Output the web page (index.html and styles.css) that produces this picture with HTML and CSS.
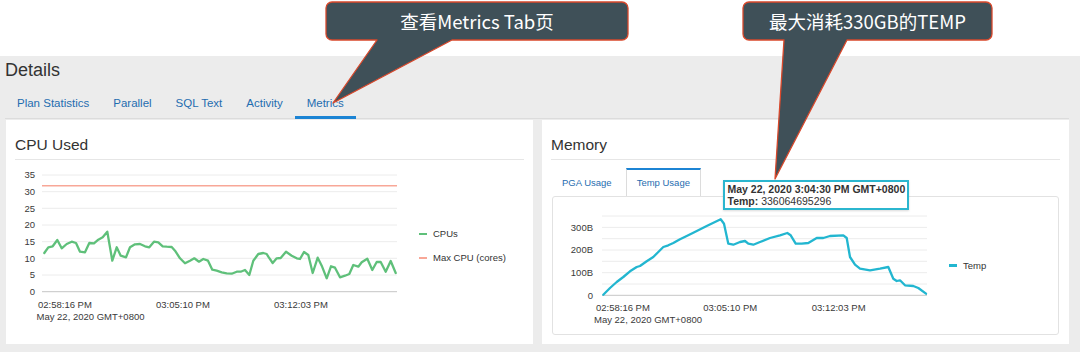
FILE: index.html
```html
<!DOCTYPE html>
<html lang="zh">
<head>
<meta charset="utf-8">
<title>Details - Metrics</title>
<link rel="stylesheet" href="styles.css">
</head>
<body>
<header class="topband"></header>
<main class="details">
  <h2 class="details-title">Details</h2>
  <nav class="tabs">
    <a class="tab">Plan Statistics</a>
    <a class="tab">Parallel</a>
    <a class="tab">SQL Text</a>
    <a class="tab">Activity</a>
    <a class="tab active">Metrics</a>
  </nav>
  <div class="panels">
    <section class="card">
      <h3 class="card-title">CPU Used</h3>
      <div class="chart-row">
        <svg class="chart" viewBox="15 161 390 169" width="390" height="169">
          <g class="grid">
            <line x1="42" x2="397" y1="176" y2="176"/>
            <line x1="42" x2="397" y1="192.7" y2="192.7"/>
            <line x1="42" x2="397" y1="209.3" y2="209.3"/>
            <line x1="42" x2="397" y1="226" y2="226"/>
            <line x1="42" x2="397" y1="242.7" y2="242.7"/>
            <line x1="42" x2="397" y1="259.3" y2="259.3"/>
            <line x1="42" x2="397" y1="276" y2="276"/>
          </g>
          <line class="axis" x1="42" x2="397" y1="292.7" y2="292.7"/>
          <g class="ylabels">
            <text x="35" y="179.4">35</text>
            <text x="35" y="196">30</text>
            <text x="35" y="212.7">25</text>
            <text x="35" y="229.4">20</text>
            <text x="35" y="246">15</text>
            <text x="35" y="262.7">10</text>
            <text x="35" y="279.4">5</text>
            <text x="35" y="296">0</text>
          </g>
          <g class="xlabels">
            <text x="38" y="308.5">02:58:16 PM</text>
            <text x="156" y="308.5">03:05:10 PM</text>
            <text x="274" y="308.5">03:12:03 PM</text>
            <text x="36.5" y="320.7">May 22, 2020 GMT+0800</text>
          </g>
          <line class="maxline" x1="42" x2="397" y1="186.7" y2="186.7"/>
          <polyline class="cpuline" points="44.3,254 48.3,248.3 52.7,247.3 57.3,241 61.7,249.3 66.7,245 71.7,242.7 76,244 80,252.7 85,253.3 89.3,244 94,244.3 98.3,240.7 102.7,238.3 107.3,232.7 112.3,261.7 116.7,248.3 120.7,256.7 126,258.3 130,248.3 135,245.3 140,245 145,247.3 149.3,248.3 154,242.7 158.3,243.3 162.7,247.3 166.7,247.7 171.7,248 175,251.7 180,259.3 185,264.3 190,261.7 194.3,259.3 199,262.7 203.3,260 208,261.7 212.3,270.7 216.7,271.7 221.7,273.3 226.7,274.3 231.7,274.7 236.7,272.7 240.7,272.7 245,271 249.3,276 253.3,261.7 258.3,255 263.3,254 266.7,255 268.3,257.7 272.7,264 276.7,259.3 280.7,259 286,252.7 291.7,256.7 296.7,259.3 300,260 304,253 308.3,256 312.7,274 317.7,258.7 321.7,266.7 326.7,279.3 331,267.3 335,268.7 340,278.3 345,276.7 349.3,275 353.3,266 358.3,267.7 361.7,263.3 367.3,259.7 372.3,271 376.7,263 380.7,263 385.7,272.7 390.7,262 395.7,274"/>
        </svg>
        <ul class="legend cpu-legend">
          <li><span class="swatch green"></span>CPUs</li>
          <li><span class="swatch salmon"></span>Max CPU (cores)</li>
        </ul>
      </div>
    </section>
    <section class="card">
      <h3 class="card-title">Memory</h3>
      <div class="subtabs">
        <span class="subtab">PGA Usage</span>
        <span class="subtab active">Temp Usage</span>
      </div>
      <div class="frame">
        <svg class="chart" viewBox="553 197 387 133" width="387" height="133">
          <g class="grid">
            <line x1="602" x2="927" y1="214" y2="214"/>
            <line x1="602" x2="927" y1="225.4" y2="225.4"/>
            <line x1="602" x2="927" y1="236.7" y2="236.7"/>
            <line x1="602" x2="927" y1="248" y2="248"/>
            <line x1="602" x2="927" y1="259.3" y2="259.3"/>
            <line x1="602" x2="927" y1="270.7" y2="270.7"/>
            <line x1="602" x2="927" y1="282" y2="282"/>
          </g>
          <line class="axis" x1="602" x2="927" y1="293.3" y2="293.3"/>
          <g class="ylabels">
            <text x="593" y="228.7">300B</text>
            <text x="593" y="251.4">200B</text>
            <text x="593" y="274">100B</text>
            <text x="593" y="296.5">0</text>
          </g>
          <g class="xlabels">
            <text x="596" y="309.3">02:58:16 PM</text>
            <text x="703.3" y="309.3">03:05:10 PM</text>
            <text x="811.7" y="309.3">03:12:03 PM</text>
            <text x="594" y="321">May 22, 2020 GMT+0800</text>
          </g>
          <polyline class="templine" points="603.3,292.7 610,286 616.7,280 623.3,275 630,269.3 636.7,265 640,264 646.7,259.3 653.3,255 658.3,250 663.3,245 668.3,243.3 673.3,241 680,237.3 686.7,234 693.3,230.7 706.7,224 720.7,217.3 724,221.7 728.3,241.7 733.3,242.7 740,240 745,239 748.3,241.7 753.3,242.7 760,240 770,236 780,233.3 787.3,231 790.7,233.3 795.7,241.7 801.7,241.7 808.3,241 816.7,236 823.3,236 830,234 843.3,233.3 846.7,236 850,255 855,262.7 860,266.7 870,268.3 880,266.7 888.3,265 893.3,276.7 896.7,279 900,278.3 905,283.3 913.3,284 918.3,286 926,291.7"/>
        </svg>
        <ul class="legend temp-legend">
          <li><span class="swatch cyan"></span>Temp</li>
        </ul>
        <div class="tooltip">
          <div class="tip-title">May 22, 2020 3:04:30 PM GMT+0800</div>
          <div><b>Temp:</b> 336064695296</div>
        </div>
      </div>
    </section>
  </div>
</main>

<svg class="callouts" viewBox="0 0 1080 352" width="1080" height="352">
  <path d="M332,2 H622 A6,6 0 0 1 628,8 V34 A6,6 0 0 1 622,40 H452 L333,103 L377,40 H332 A6,6 0 0 1 326,34 V8 A6,6 0 0 1 332,2 Z"/>
  <path d="M749,2 H986 A6,6 0 0 1 992,8 V34 A6,6 0 0 1 986,40 H847 L775,179 L784,40 H749 A6,6 0 0 1 743,34 V8 A6,6 0 0 1 749,2 Z"/>
</svg>
<div class="callout-text c1">查看Metrics Tab页</div>
<div class="callout-text c2">最大消耗330GB的TEMP</div>
</body>
</html>
```

FILE: styles.css
```css
* { box-sizing: border-box; }

html, body {
  margin: 0;
  padding: 0;
}

body {
  position: relative;
  width: 1080px;
  height: 352px;
  overflow: hidden;
  font-family: "Liberation Sans", Arial, sans-serif;
  color: #333;
  background: #ececec;
}

.topband {
  height: 56px;
  background: #ffffff;
}

.details {
  padding: 3px 11px 7px 6px;
  background: #ececec;
}

.details-title {
  margin: 0 0 0 -1px;
  font-size: 18px;
  line-height: 22px;
  font-weight: normal;
  color: #333;
}

.tabs {
  display: flex;
  margin: 15px 0 0 -1px;
  border-bottom: 1px solid #dcdcdc;
}

.tab {
  padding: 0 12px 6px;
  font-size: 11.5px;
  line-height: 14px;
  color: #1f6db0;
  border-bottom: 3px solid transparent;
  margin-bottom: -1px;
}

.tab.active {
  border-bottom-color: #1c84d4;
}

.panels {
  display: grid;
  grid-template-columns: 1fr 1fr;
  gap: 9px;
  height: 224px;
  margin-top: 1px;
}

.card {
  background: #ffffff;
  padding: 16px 9px 0;
}

.card-title {
  margin: 0;
  padding-bottom: 5px;
  border-bottom: 1px solid #e6e6e6;
  font-size: 15.5px;
  line-height: 18px;
  font-weight: normal;
  color: #333;
}

.chart-row {
  display: flex;
  align-items: center;
}

.chart {
  display: block;
  flex: none;
}

.chart .grid line {
  stroke: #ececec;
  stroke-width: 1;
}

.chart .axis {
  stroke: #c6c6c6;
  stroke-width: 1;
}

.chart text {
  font-family: "Liberation Sans", Arial, sans-serif;
  font-size: 9.5px;
  fill: #3a3a3a;
}

.chart .ylabels text {
  text-anchor: end;
}

.maxline {
  stroke: #f8a797;
  stroke-width: 1.6;
}

.cpuline {
  fill: none;
  stroke: #5fc07a;
  stroke-width: 2.3;
  stroke-linejoin: round;
  stroke-linecap: round;
}

.templine {
  fill: none;
  stroke: #22b6d0;
  stroke-width: 2.3;
  stroke-linejoin: round;
  stroke-linecap: round;
}

.legend {
  list-style: none;
  margin: 0;
  padding: 0 0 0 14px;
  display: flex;
  flex-direction: column;
  gap: 12px;
  font-size: 9.5px;
  line-height: 12px;
  color: #333;
}

.legend li {
  display: flex;
  align-items: center;
  white-space: nowrap;
}

.swatch {
  display: inline-block;
  width: 8px;
  height: 2.5px;
  margin-right: 6px;
}

.swatch.green { background: #5fc07a; }
.swatch.salmon { background: #f8a797; }
.swatch.cyan { background: #22b6d0; }

.cpu-legend {
  margin-top: 3px;
}

.subtabs {
  display: flex;
  gap: 3px;
  margin-top: 8px;
  position: relative;
  z-index: 1;
}

.subtab {
  padding: 0 11px;
  border-top: 2px solid transparent;
  font-size: 9.5px;
  line-height: 26px;
  color: #1f6db0;
}

.subtab.active {
  padding: 0 10px;
  background: #ffffff;
  border: 1px solid #dcdcdc;
  border-top: 2px solid #1c84d4;
  border-bottom: none;
  line-height: 26px;
  height: 28px;
  margin-bottom: -1px;
}

.frame {
  position: relative;
  display: flex;
  align-items: center;
  height: 139px;
  margin: 0 1px;
  border: 1px solid #e2e2e2;
  border-radius: 3px;
}

.temp-legend {
  padding-left: 9px;
}

.tooltip {
  position: absolute;
  left: 170px;
  top: -17px;
  z-index: 2;
  padding: 1px 2px 1px 2.5px;
  background: #ffffff;
  border: 2px solid #2bb6cf;
  box-shadow: 0 1px 2px rgba(0, 0, 0, 0.15);
  font-size: 10.5px;
  line-height: 12px;
  color: #333;
  white-space: nowrap;
}

.tip-title {
  font-weight: bold;
}

.callouts {
  position: absolute;
  left: 0;
  top: 0;
  z-index: 5;
  pointer-events: none;
}

.callouts path {
  fill: #3f5058;
  stroke: #d9482b;
  stroke-width: 1.3;
  stroke-linejoin: round;
}

.callout-text {
  position: absolute;
  top: 2px;
  z-index: 6;
  height: 38px;
  line-height: 38px;
  text-align: center;
  color: #ffffff;
  font-family: "Noto Sans CJK SC", "Noto Sans", sans-serif;
  font-size: 18.5px;
  white-space: nowrap;
}

.callout-text.c1 {
  left: 326px;
  width: 302px;
}

.callout-text.c2 {
  left: 743px;
  width: 249px;
}
```
